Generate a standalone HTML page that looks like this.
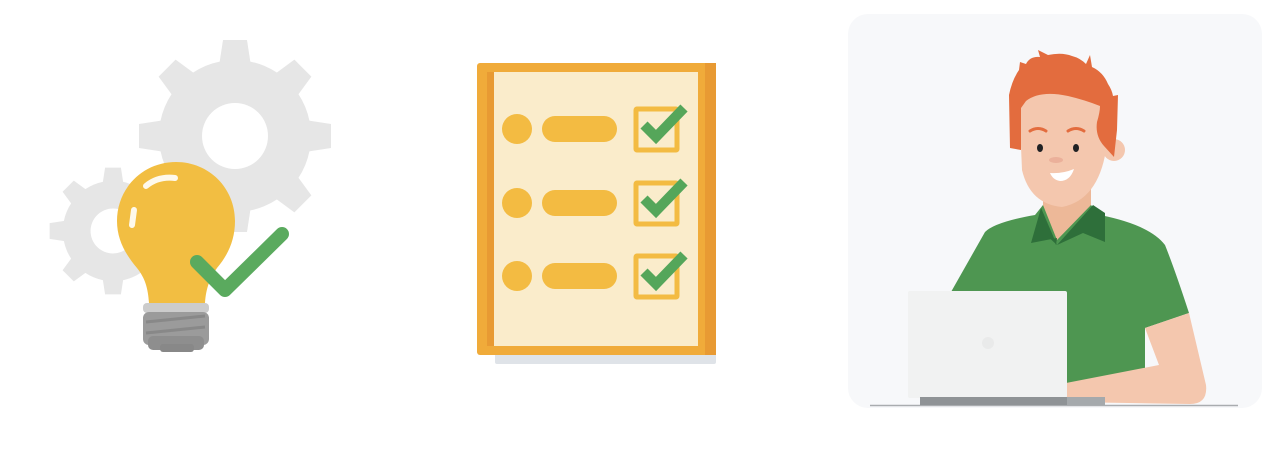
<!DOCTYPE html>
<html><head><style>html,body{margin:0;padding:0;background:#fff;width:1286px;height:450px;overflow:hidden}</style></head>
<body>
<svg width="1286" height="450" viewBox="0 0 1286 450" xmlns="http://www.w3.org/2000/svg">
<defs>
<g id="gearBig">
  <g fill="#e6e6e6">
    <circle r="76"/>
    <g id="t"><path d="M-16 -70 L-12 -96 L12 -96 L16 -70Z"/></g>
    <use href="#t" transform="rotate(45)"/><use href="#t" transform="rotate(90)"/><use href="#t" transform="rotate(135)"/>
    <use href="#t" transform="rotate(180)"/><use href="#t" transform="rotate(225)"/><use href="#t" transform="rotate(270)"/><use href="#t" transform="rotate(315)"/>
  </g>
</g>
</defs>
<!-- gears -->
<g transform="translate(235,136)">
  <use href="#gearBig"/>
  <circle r="33" fill="#fff"/>
</g>
<g transform="translate(113,231) scale(0.66)">
  <use href="#gearBig"/>
  <circle r="34" fill="#fff"/>
</g>
<!-- bulb -->
<path d="M176 162 C143 162 117 188 117 221 C117 240 126 255 137 268 C145 278 148 288 149 303 L205 303 C206 288 210 278 217 268 C228 255 235 240 235 221 C235 188 209 162 176 162Z" fill="#f2be42"/>
<path d="M146 186 Q158 176 175 178" stroke="#fff" stroke-width="6" stroke-linecap="round" fill="none" opacity="0.9"/>
<path d="M134 210 L132 225" stroke="#fff" stroke-width="6" stroke-linecap="round" fill="none" opacity="0.9"/>
<rect x="143" y="303" width="66" height="10" rx="4" fill="#cccccc"/>
<rect x="143" y="312" width="66" height="33" rx="6" fill="#9b9b9b"/>
<path d="M146 322 L205 316 M146 333 L205 327" stroke="#888" stroke-width="3"/>
<rect x="148" y="336" width="56" height="14" rx="5" fill="#8e8e8e"/>
<rect x="160" y="344" width="34" height="8" rx="3" fill="#888"/>
<path d="M197 262 L225 290 L282 234" stroke="#5aaa5e" stroke-width="14" stroke-linecap="round" stroke-linejoin="round" fill="none"/>
<!-- clipboard -->
<rect x="495" y="352" width="221" height="12" rx="2" fill="#dfe3e8"/>
<rect x="477" y="63" width="239" height="292" rx="3" fill="#f0ab3a"/>
<rect x="487" y="72" width="7" height="274" fill="#e89a33"/>
<rect x="705" y="63" width="11" height="292" fill="#e89a33"/>
<rect x="494" y="72" width="204" height="274" fill="#faeccb"/>
<g fill="#f3bb42">
  <circle cx="517" cy="129" r="15"/><rect x="542" y="116" width="75" height="26" rx="13"/>
  <circle cx="517" cy="203" r="15"/><rect x="542" y="190" width="75" height="26" rx="13"/>
  <circle cx="517" cy="276" r="15"/><rect x="542" y="263" width="75" height="26" rx="13"/>
</g>
<g fill="none" stroke="#f3bb42" stroke-width="5">
  <rect x="636" y="109" width="41" height="41" rx="1"/>
  <rect x="636" y="183" width="41" height="41" rx="1"/>
  <rect x="636" y="256" width="41" height="41" rx="1"/>
</g>
<g fill="none" stroke="#55a65a" stroke-width="10" stroke-linejoin="miter">
  <path d="M644 125 L656 137 L684 108"/>
  <path d="M644 199 L656 211 L684 182"/>
  <path d="M644 272 L656 284 L684 255"/>
</g>
<!-- person panel -->
<rect x="848" y="14" width="414" height="394" rx="20" fill="#f7f8fa"/>
<line x1="870" y1="405.5" x2="1238" y2="405.5" stroke="#a9acaf" stroke-width="1.5"/>
<!-- neck -->
<path d="M1043 185 L1091 185 L1091 240 L1057 245 L1043 240Z" fill="#edb898"/>
<!-- shirt -->
<path d="M951 292 L985 232 Q995 222 1035 215 L1043 205 L1057 240 L1091 205 L1100 215 Q1150 225 1165 245 Q1175 270 1189 313 L1145 328 L1145 382 L1066 390 L951 292Z" fill="#4e9651"/>
<path d="M1041 208 L1031 243 L1057 238 L1056 245 Z" fill="#2e6f3a"/>
<path d="M1057 245 L1083 233 L1105 242 L1105 213 L1093 205Z" fill="#2e6f3a"/>
<path d="M1041 208 L1057 245 L1043 232Z" fill="#2e6f3a"/>
<!-- arm -->
<path d="M1145 328 L1189 313 L1206 385 Q1208 404 1190 404 L1066 402 L1066 383 L1159 365 L1145 328Z" fill="#f4c7ae"/>
<!-- ear -->
<circle cx="1114" cy="150" r="11" fill="#f4c7ae"/>
<!-- face -->
<path d="M1019 100 Q1060 85 1104 100 L1106 150 Q1098 200 1062 207 Q1030 204 1022 170 Z" fill="#f4c7ae"/>
<!-- hair -->
<path d="M1010 148 L1009 95 Q1012 80 1019 70 L1020 62 L1026 64 Q1030 56 1040 57 L1038 50 L1048 55 Q1062 52 1072 56 Q1080 58 1086 64 L1090 55 L1092 67 Q1103 72 1108 84 Q1112 90 1113 96 L1118 95 L1117 130 L1114 157 L1104 146 Q1095 136 1097 122 Q1100 112 1100 106 Q1085 100 1068 96 Q1040 90 1026 101 L1021 108 L1021 150Z" fill="#e36c3e"/>
<path d="M1030 131 Q1038 126 1046 131 M1068 131 Q1076 126 1084 131" stroke="#e36c3e" stroke-width="3" fill="none" stroke-linecap="round"/>
<ellipse cx="1040" cy="148" rx="3" ry="4" fill="#202124"/>
<ellipse cx="1076" cy="148" rx="3" ry="4" fill="#202124"/>
<ellipse cx="1056" cy="160" rx="7" ry="3" fill="#ebb09a"/>
<path d="M1050 173 Q1062 174 1074 169 Q1070 181 1060 181 Q1053 180 1050 173Z" fill="#fff"/>
<!-- laptop -->
<rect x="908" y="291" width="159" height="107" rx="2" fill="#f1f2f2"/>
<circle cx="988" cy="343" r="6" fill="#e9eaea"/>
<rect x="920" y="397" width="147" height="8" fill="#8f9396"/>
<rect x="1067" y="397" width="38" height="8" fill="#a5a9ac"/>
</svg>
</body></html>
